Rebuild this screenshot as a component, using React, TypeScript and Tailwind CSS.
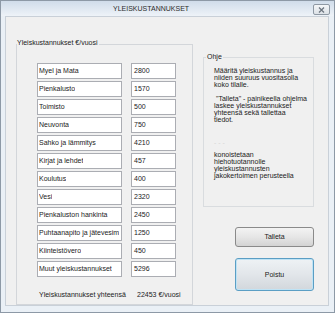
const rows = [
  { name: "Myel ja Mata", value: "2800" },
  { name: "Pienkalusto", value: "1570" },
  { name: "Toimisto", value: "500" },
  { name: "Neuvonta", value: "750" },
  { name: "Sahko ja lämmitys", value: "4210" },
  { name: "Kirjat ja lehdet", value: "457" },
  { name: "Koulutus", value: "400" },
  { name: "Vesi", value: "2320" },
  { name: "Pienkaluston hankinta", value: "2450" },
  { name: "Puhtaanapito ja jätevesim", value: "1250" },
  { name: "Kiinteistövero", value: "450" },
  { name: "Muut yleiskustannukset", value: "5296" },
];

export default function App() {
  return (
    <div className="w-[335px] h-[313px] border border-[#8d99a6] bg-[#eaf0f6] flex flex-col font-['Liberation_Sans',Arial,sans-serif] text-[7px] leading-[8px] text-[#1b1b1b]">
      {/* title bar */}
      <div className="h-[15px] flex items-center bg-gradient-to-b from-[#d0dcea] to-[#eef3f8]">
        <span className="pl-[112px] text-[#2b2b2b]">YLEISKUSTANNUKSET</span>
        <div className="ml-auto mr-[4px] mt-[2px] w-[17px] h-[11px] border border-[#8e98a3] rounded-[2px] bg-gradient-to-b from-[#f4f6f8] to-[#dde2e7] flex items-center justify-center">
          <svg width="7" height="6" viewBox="0 0 7 6">
            <path d="M1 0.5 L6 5.5 M6 0.5 L1 5.5" stroke="#6d7680" strokeWidth="1.3" />
          </svg>
        </div>
      </div>

      {/* client area */}
      <div className="ml-[4px] w-[324px] h-[290px] border border-[#c9d0d8] bg-[#f0f0f0] flex pl-[10px] pt-[27px]">
        {/* left group */}
        <div className="relative w-[177px] h-[261px] border border-[#d3d6da] pl-[20px] pt-[18px]">
          <span className="absolute left-0 top-[-6px] bg-[#f0f0f0] pr-[1px]">Yleiskustannukset €/vuosi</span>
          <div className="flex flex-col gap-[2px]">
            {rows.map((r) => (
              <div key={r.name} className="flex gap-[9px]">
                <div className="w-[85px] h-[16px] border border-[#abadb3] bg-white pl-[1px] flex items-center overflow-hidden whitespace-nowrap">
                  <span className="block overflow-hidden">{r.name}</span>
                </div>
                <div className="w-[45px] h-[16px] border border-[#abadb3] bg-white pl-[2px] flex items-center">
                  {r.value}
                </div>
              </div>
            ))}
          </div>
          <div className="flex mt-[14px]">
            <span className="w-[100px] pl-[2px]">Yleiskustannukset yhteensä</span>
            <span>22453 €/vuosi</span>
          </div>
        </div>

        {/* right column */}
        <div className="ml-[10px] mt-[13px] flex flex-col">
          <div className="relative w-[111px] h-[150px] border border-[#d9dcdf] pl-[10px] pt-[9px] leading-[7px]">
            <span className="absolute left-[2px] top-[-5px] bg-[#f0f0f0] px-[1px] leading-[8px]">Ohje</span>
            <p>Määritä yleiskustannus ja<br />niiden suuruus vuositasolla<br />koko tilalle.</p>
            <p className="mt-[7px] whitespace-pre">{" \"Talleta\" - painikeella ohjelma"}<br />laskee yleiskustannukset<br />yhteensä sekä tallettaa<br />tiedot.</p>
            <p className="mt-[16px] text-[#d6d6d6]">- - -</p>
            <p className="mt-[5px]">konoistetaan<br />hiehotuotannolle<br />yleiskustannusten<br />jakokertoimen perusteella</p>
          </div>
          <button className="ml-[32px] mt-[20px] w-[79px] h-[20px] border border-[#8a8a8a] rounded-[3px] bg-gradient-to-b from-[#f3f3f3] via-[#e6e6e6] to-[#d3d3d3] text-[7px]">
            Talleta
          </button>
          <button className="ml-[32px] mt-[11px] w-[79px] h-[33px] border border-[#5b9ec4] rounded-[3px] bg-gradient-to-b from-[#eef2f5] via-[#e2e6ea] to-[#d2d7dc] shadow-[inset_0_0_0_1px_#bfe3f5] text-[7px]">
            Poistu
          </button>
        </div>
      </div>
    </div>
  );
}
